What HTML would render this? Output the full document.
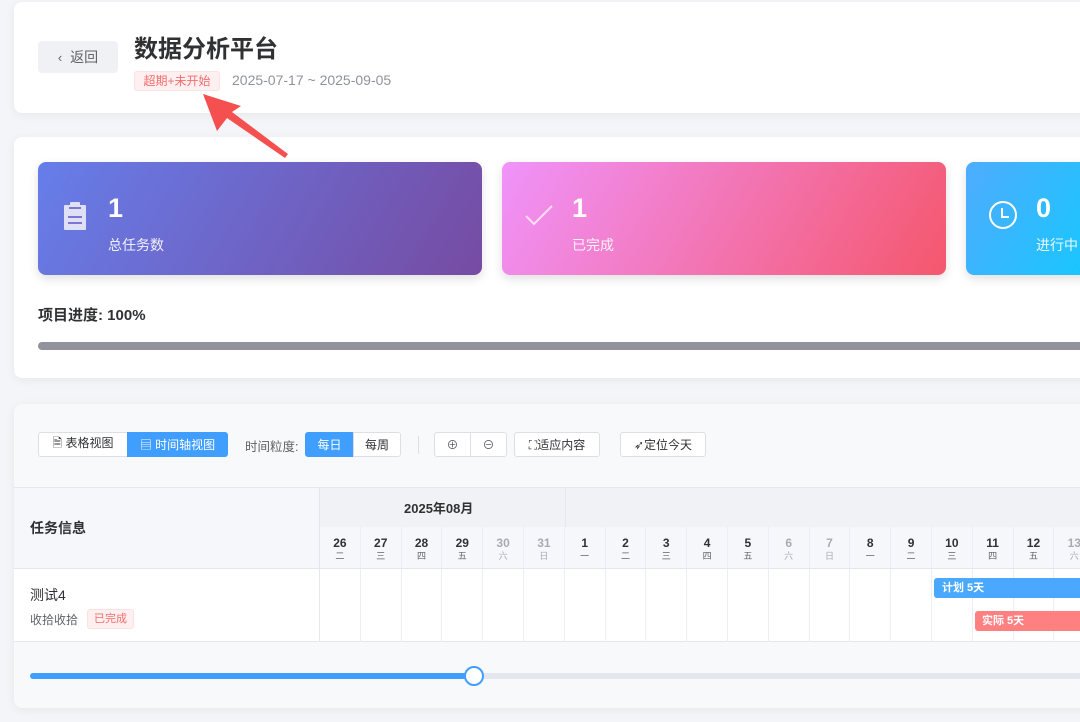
<!DOCTYPE html>
<html><head><meta charset="utf-8"><style>
*{box-sizing:border-box;margin:0;padding:0}
body{width:1080px;height:722px;overflow:hidden;background:#f4f5f8;font-family:"Liberation Sans","Noto Sans CJK SC",sans-serif;color:#303133;position:relative}
.card{position:absolute;left:14px;width:1090px;background:#fff;border-radius:8px;box-shadow:0 2px 10px rgba(0,0,0,.06)}
.abs{position:absolute}
.stat{position:absolute;top:162px;height:113px;border-radius:8px;color:#fff;box-shadow:0 4px 10px rgba(0,0,0,.12)}
.stat .n{position:absolute;left:70px;top:31px;font-size:27px;font-weight:bold}
.stat .l{position:absolute;left:70px;top:73px;font-size:14px;opacity:.9}
.btn{position:absolute;top:432px;height:25px;border:1px solid #dcdfe6;border-radius:3px;background:#fff;font-size:12px;color:#303133;display:flex;align-items:center;justify-content:center}
.cols{position:absolute;left:320px;display:flex}
.cols div{width:40.8px;flex:none;border-right:1px solid #ebeef5}
.day{text-align:center;font-size:12px;font-weight:bold;color:#303133;line-height:13px;padding-top:10px}
.day small{display:block;font-size:9px;font-weight:normal;color:#606266}
.day.g{color:#a8abb2}.day.g small{color:#a8abb2}
</style></head><body>
<div class="card" style="top:2px;height:111px"></div>
<div class="abs" style="left:38px;top:41px;width:80px;height:32px;background:#f0f1f4;border-radius:4px;font-size:14px;color:#606266;display:flex;align-items:center;justify-content:center;gap:8px"><span style="font-size:13px">&lsaquo;</span>返回</div>
<div class="abs" style="left:134px;top:29px;font-size:24px;font-weight:bold;color:#303133">数据分析平台</div>
<div class="abs" style="left:134px;top:71px;width:86px;height:20px;background:#fef0f0;border:1px solid #fde2e2;border-radius:3px;color:#f56c6c;font-size:12px;text-align:center;line-height:18px">超期+未开始</div>
<div class="abs" style="left:232px;top:72px;font-size:14px;color:#909399">2025-07-17 ~ 2025-09-05</div>

<div class="card" style="top:137px;height:241px"></div>
<div class="stat" style="left:38px;width:444px;background:linear-gradient(120deg,#667eea,#764ba2)">
<svg class="abs" style="left:26px;top:40px" width="22" height="28"><rect x="0" y="3" width="22" height="25" rx="1" fill="#e0e0f5"/><rect x="6" y="0" width="10" height="6" rx="1" fill="#e0e0f5"/><rect x="4" y="14" width="14" height="2" fill="#7b76d8"/><rect x="4" y="20" width="14" height="2" fill="#7b76d8"/><rect x="5" y="5" width="12" height="2" fill="#7b76d8"/></svg>
<div class="n">1</div><div class="l">总任务数</div></div>
<div class="stat" style="left:502px;width:444px;background:linear-gradient(120deg,#f093fb,#f5576c)">
<svg class="abs" style="left:22px;top:42px" width="30" height="24"><polyline points="2,12 10,20 28,2" fill="none" stroke="#fde" stroke-width="2"/></svg>
<div class="n">1</div><div class="l">已完成</div></div>
<div class="stat" style="left:966px;width:200px;background:linear-gradient(120deg,#4facfe,#00d2fe)">
<svg class="abs" style="left:22px;top:38px" width="30" height="30"><circle cx="15" cy="15" r="13" fill="none" stroke="#fff" stroke-width="2"/><polyline points="14,8 14,17 21,17" fill="none" stroke="#fff" stroke-width="2"/></svg>
<div class="n">0</div><div class="l">进行中</div></div>
<svg class="abs" style="left:195px;top:88px" width="100" height="75"><polygon points="8,6 46,18 37,24 93,66 90,70 32,30 22,43" fill="#f55050"/></svg>
<div class="abs" style="left:38px;top:304px;font-size:15px;font-weight:bold;color:#303133">项目进度: 100%</div>
<div class="abs" style="left:38px;top:342px;width:1060px;height:8px;border-radius:4px;background:#909399"></div>

<div class="card" style="top:404px;height:304px;background:#f8f9fb"></div>
<div class="btn" style="left:38px;width:90px;border-radius:3px 0 0 3px">🗎&nbsp;表格视图</div>
<div class="btn" style="left:127px;width:101px;background:#409eff;border-color:#409eff;color:#fff;border-radius:0 3px 3px 0">▤&nbsp;时间轴视图</div>
<div class="abs" style="left:245px;top:436px;font-size:12.5px;color:#606266">时间粒度:</div>
<div class="btn" style="left:305px;width:49px;background:#409eff;border-color:#409eff;color:#fff;border-radius:3px 0 0 3px">每日</div>
<div class="btn" style="left:353px;width:48px;border-radius:0 3px 3px 0">每周</div>
<div class="abs" style="left:418px;top:436px;width:1px;height:18px;background:#dcdfe6"></div>
<div class="btn" style="left:434px;width:37px;border-radius:3px 0 0 3px;color:#606266">⊕</div>
<div class="btn" style="left:470px;width:37px;border-radius:0 3px 3px 0;color:#606266">⊖</div>
<div class="btn" style="left:514px;width:86px">⛶适应内容</div>
<div class="btn" style="left:620px;width:86px">➶定位今天</div>

<div class="abs" style="left:14px;top:487px;width:1070px;height:82px;background:#f5f7fa;border-top:1px solid #e4e7ed;border-bottom:1px solid #e4e7ed"></div>
<div class="abs" style="left:14px;top:487px;width:306px;height:82px;border-right:1px solid #e4e7ed"></div>
<div class="abs" style="left:30px;top:518px;font-size:14px;font-weight:bold">任务信息</div>
<div class="abs" style="left:320px;top:488px;width:760px;height:39px;background:#f0f2f5"></div>
<div class="abs" style="left:565px;top:488px;width:1px;height:39px;background:#e4e7ed"></div>
<div class="abs" style="left:404px;top:498px;font-size:13px;font-weight:bold">2025年08月</div>
<div class="cols" style="top:527px;height:41px">
<div class="day">26<small>二</small></div><div class="day">27<small>三</small></div><div class="day">28<small>四</small></div><div class="day">29<small>五</small></div><div class="day g">30<small>六</small></div><div class="day g">31<small>日</small></div><div class="day">1<small>一</small></div><div class="day">2<small>二</small></div><div class="day">3<small>三</small></div><div class="day">4<small>四</small></div><div class="day">5<small>五</small></div><div class="day g">6<small>六</small></div><div class="day g">7<small>日</small></div><div class="day">8<small>一</small></div><div class="day">9<small>二</small></div><div class="day">10<small>三</small></div><div class="day">11<small>四</small></div><div class="day">12<small>五</small></div><div class="day g">13<small>六</small></div>
</div>
<div class="abs" style="left:14px;top:569px;width:1070px;height:73px;background:#fff;border-bottom:1px solid #e4e7ed"></div>
<div class="abs" style="left:319px;top:569px;width:1px;height:73px;background:#e4e7ed"></div>
<div class="cols" style="top:569px;height:73px"><div></div><div></div><div></div><div></div><div></div><div></div><div></div><div></div><div></div><div></div><div></div><div></div><div></div><div></div><div></div><div></div><div></div><div></div><div></div></div>
<div class="abs" style="left:30px;top:585px;font-size:14px;color:#303133">测试4</div>
<div class="abs" style="left:30px;top:611px;font-size:12px;color:#606266">收拾收拾</div>
<div class="abs" style="left:87px;top:609px;width:47px;height:20px;background:#fef0f0;border:1px solid #fde2e2;border-radius:3px;color:#f56c6c;font-size:11px;text-align:center;line-height:18px">已完成</div>
<div class="abs" style="left:934px;top:578px;width:160px;height:20px;background:#4aa8ff;border-radius:3px;color:#fff;font-size:11px;font-weight:bold;line-height:20px;padding-left:8px">计划 5天</div>
<div class="abs" style="left:975px;top:611px;width:120px;height:20px;background:#ff8080;border-radius:3px;color:#fff;font-size:11px;font-weight:bold;line-height:20px;padding-left:7px">实际 5天</div>
<div class="abs" style="left:30px;top:673px;width:1060px;height:6px;border-radius:3px;background:#e4e7ed"></div>
<div class="abs" style="left:30px;top:673px;width:444px;height:6px;border-radius:3px;background:#409eff"></div>
<div class="abs" style="left:464px;top:666px;width:20px;height:20px;border-radius:50%;background:#fff;border:2px solid #409eff"></div>
</body></html>
